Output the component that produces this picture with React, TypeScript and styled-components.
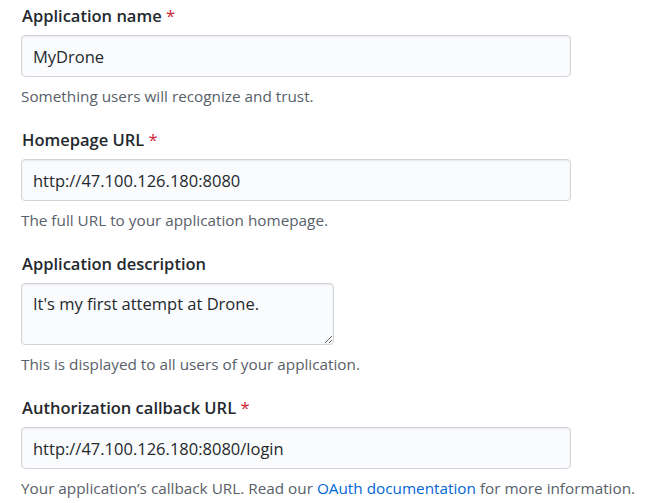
import React from "react";
import styled, { createGlobalStyle } from "styled-components";

const FONT = `"Open Sans", "Noto Sans", "Liberation Sans", sans-serif`;

const Global = createGlobalStyle`
  html, body { margin: 0; padding: 0; background: #ffffff; }
  body { font-family: ${FONT}; color: #24292e; }
`;

const Form = styled.form`
  display: flex;
  flex-direction: column;
  padding: 3px 0 0 21px;
  width: 624px;
`;

const Group = styled.div`
  display: flex;
  flex-direction: column;
  margin-bottom: 20px;
`;

const Label = styled.label`
  font-size: 16.5px;
  font-weight: 600;
  line-height: 25px;
  margin: 0 0 7px 1px;
  color: #24292e;
`;

const Required = styled.span`
  color: #cb2431;
  font-weight: 400;
`;

const TextInput = styled.input`
  box-sizing: border-box;
  width: ${(p: { $w: number }) => p.$w}px;
  height: 42px;
  padding: 0 11px;
  border: 1px solid #d1d5da;
  border-radius: 4px;
  background: #fafbfc;
  box-shadow: inset 0 1px 2px rgba(27, 31, 35, 0.075);
  font-family: ${FONT};
  font-size: 16.5px;
  color: #24292e;
  outline: none;
`;

const TextArea = styled.textarea`
  box-sizing: border-box;
  width: 313px;
  height: 62px;
  padding: 7px 11px;
  border: 1px solid #d1d5da;
  border-radius: 4px;
  background: #fafbfc;
  box-shadow: inset 0 1px 2px rgba(27, 31, 35, 0.075);
  font-family: ${FONT};
  font-size: 16.5px;
  line-height: 25px;
  color: #24292e;
  outline: none;
  resize: both;
  display: block;
`;

const Note = styled.p`
  margin: 8px 0 0 0;
  font-size: 15.3px;
  line-height: 22px;
  color: #586069;
`;

const Link = styled.a`
  color: #0366d6;
  text-decoration: none;
`;

export default function App() {
  return (
    <>
      <Global />
      <Form onSubmit={(e) => e.preventDefault()}>
        <Group>
          <Label>
            Application name <Required>*</Required>
          </Label>
          <TextInput $w={550} defaultValue="MyDrone" />
          <Note>Something users will recognize and trust.</Note>
        </Group>
        <Group>
          <Label>
            Homepage URL <Required>*</Required>
          </Label>
          <TextInput $w={550} defaultValue="http://47.100.126.180:8080" />
          <Note>The full URL to your application homepage.</Note>
        </Group>
        <Group>
          <Label>Application description</Label>
          <TextArea defaultValue="It's my first attempt at Drone." />
          <Note>This is displayed to all users of your application.</Note>
        </Group>
        <Group>
          <Label>
            Authorization callback URL <Required>*</Required>
          </Label>
          <TextInput $w={550} defaultValue="http://47.100.126.180:8080/login" />
          <Note>
            Your application’s callback URL. Read our{" "}
            <Link href="#">OAuth documentation</Link> for more information.
          </Note>
        </Group>
      </Form>
    </>
  );
}
